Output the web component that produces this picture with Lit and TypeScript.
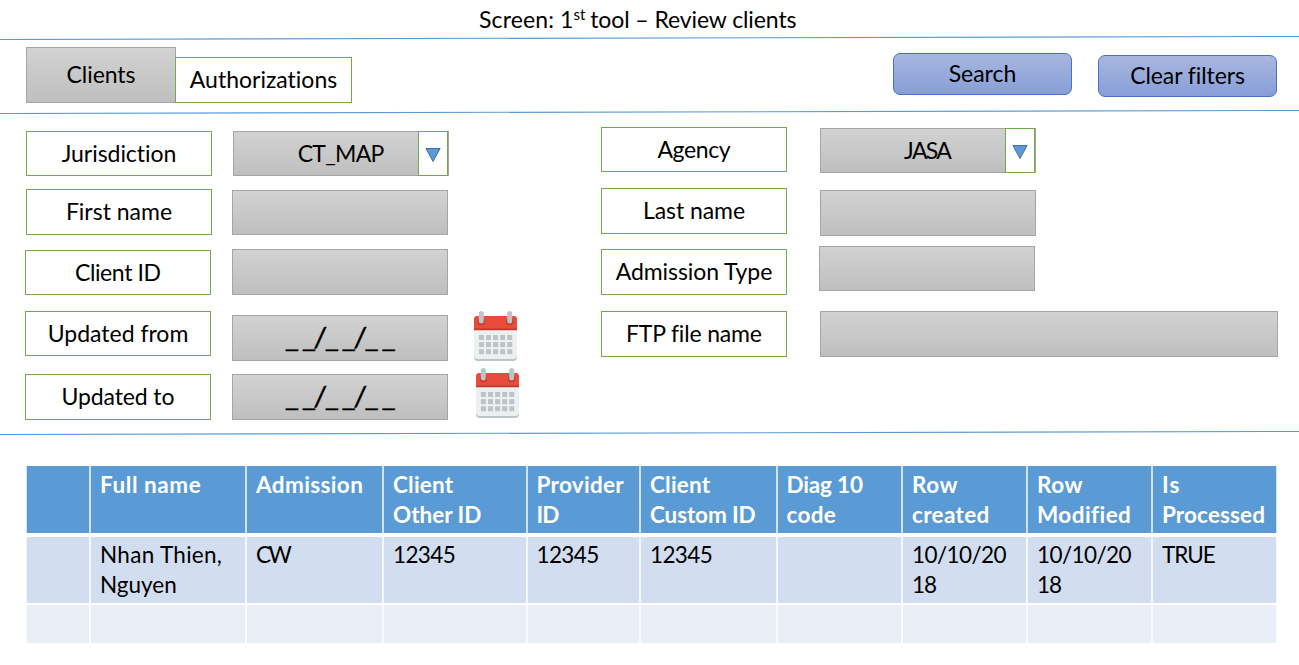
import { LitElement, html, css, svg } from "lit";
import { customElement, property } from "lit/decorators.js";

/** Text that is tracked so that its advance equals a given width. */
@customElement("fit-text")
class FitText extends LitElement {
  @property({ type: Number }) width = 0;

  static styles = css`
    :host { display: block; white-space: nowrap; }
    span { display: inline-block; }
  `;

  render() {
    return html`<span><slot></slot></span>`;
  }

  firstUpdated() {
    const span = this.renderRoot.querySelector("span") as HTMLElement;
    const count = (this.textContent || "").length;
    if (!this.width || count < 2) return;
    const natural = span.offsetWidth;
    const step = (this.width - natural) / (count - 1);
    span.style.letterSpacing = `${step}px`;
    span.style.marginRight = `${-step}px`;
  }
}

@customElement("rule-line")
class RuleLine extends LitElement {
  static styles = css`
    :host { display: block; height: 4px; flex: none; }
    svg { display: block; width: 100%; height: 4px; }
  `;
  render() {
    return html`<svg viewBox="0 0 1299 4" preserveAspectRatio="none">
      <line x1="0" y1="3.5" x2="1299" y2="0.5" stroke="#5b9bd5" stroke-width="1.1"></line>
    </svg>`;
  }
}

@customElement("calendar-icon")
class CalendarIcon extends LitElement {
  static styles = css`
    :host { display: block; width: 43px; height: 50px; }
    svg { display: block; }
  `;
  render() {
    const dots = [];
    for (let r = 0; r < 3; r++)
      for (let c = 0; c < 5; c++)
        dots.push(svg`<rect x=${4.9 + c * 7.1} y=${24 + r * 7.1} width="5" height="5" fill="#bdc3c7"></rect>`);
    return html`<svg width="43" height="50" viewBox="0 0 43 50">
      <path d="M0 20H43V46Q43 50 39 50H4Q0 50 0 46Z" fill="#bdc3c7"></path>
      <path d="M0 19H43V44Q43 48 39 48H4Q0 48 0 44Z" fill="#ecf0f1"></path>
      <path d="M4 5H39Q43 5 43 9V19.3H0V9Q0 5 4 5Z" fill="#c0392b"></path>
      <path d="M4 5H39Q43 5 43 9V17.5H0V9Q0 5 4 5Z" fill="#e74c3c"></path>
      <circle cx="7.3" cy="10.6" r="3.7" fill="#c0392b"></circle>
      <circle cx="35.7" cy="10.6" r="3.7" fill="#c0392b"></circle>
      <rect x="4.8" y="0" width="5" height="12.4" rx="2.5" fill="#bdc3c7"></rect>
      <rect x="33.2" y="0" width="5" height="12.4" rx="2.5" fill="#bdc3c7"></rect>
      ${dots}
    </svg>`;
  }
}

type Line = [string, number];
const HEAD: Line[][] = [
  [],
  [["Full name", 100.5]],
  [["Admission", 107]],
  [["Client", 60], ["Other ID", 88]],
  [["Provider", 87], ["ID", 23]],
  [["Client", 60], ["Custom ID", 106]],
  [["Diag 10", 77], ["code", 49]],
  [["Row", 46], ["created", 77]],
  [["Row", 46], ["Modified", 94]],
  [["Is", 17], ["Processed", 103]],
];
const ROW: Line[][] = [
  [],
  [["Nhan Thien,", 122], ["Nguyen", 77]],
  [["CW", 35.5]],
  [["12345", 62.5]],
  [["12345", 62.5]],
  [["12345", 62.5]],
  [],
  [["10/10/20", 95], ["18", 25]],
  [["10/10/20", 95], ["18", 25]],
  [["TRUE", 54]],
];

@customElement("app-root")
class AppRoot extends LitElement {
  static styles = css`
    :host {
      display: flex; flex-direction: column; width: 1299px; height: 665px;
      background: #fff; color: #000; overflow: hidden;
      font-family: Lato, "Liberation Sans", sans-serif; font-size: 23px; line-height: 30px;
      font-variant-ligatures: none;
    }
    * { box-sizing: border-box; }
    .title { height: 36px; padding: 4px 0 0 479px; display: flex; white-space: nowrap; }
    .sup { font-size: 15px; line-height: 20px; }
    .title .rest { margin-left: 5px; }

    .bar { height: 70px; display: flex; padding: 7px 22px 0 26px; align-items: flex-start; }
    .tab { display: flex; align-items: center; justify-content: center; padding-bottom: 2px; }
    .tab.on { width: 150px; height: 56px; }
    .tab.off { width: 177px; height: 46px; margin: 10px 0 0 -1px; }
    .grey { background: linear-gradient(#d2d2d2, #bfbfbf); border: 1px solid #a5a5a5; }
    .green { background: #fff; border: 1px solid #70ad47; }
    .space { flex: 1; }
    .btn {
      width: 179px; height: 42px; border: 1px solid #4472c4; border-radius: 7px;
      background: linear-gradient(#a8b7df, #879ed7);
      display: flex; align-items: center; justify-content: center; padding-bottom: 2px;
    }
    .btn.search { margin: 6px 26px 0 0; }
    .btn.clear { margin-top: 8px; }

    .filters { height: 317px; display: flex; align-items: flex-start; padding-left: 25px; }
    .col { display: flex; flex-direction: column; align-items: flex-start; flex: none; }
    .labels { width: 187px; }
    .box { width: 186px; height: 45px; display: flex; align-items: center; justify-content: center; padding-bottom: 2px; }
    .h46 { height: 46px; }
    .in1 { margin-left: 1px; }
    .w216 { width: 216px; }
    .w458 { width: 458px; }
    .m10 { margin-top: 10px; } .m13 { margin-top: 13px; }
    .m14 { margin-top: 14px; } .m15 { margin-top: 15px; } .m16 { margin-top: 16px; }
    .m17 { margin-top: 17px; } .m18 { margin-top: 18px; } .m20 { margin-top: 20px; }
    .c1 { margin-top: 17px; }
    .c2 { margin: 17px 0 0 20px; width: 217px; }
    .c3 { margin: 197px 0 0 25px; width: 45px; }
    .c4 { margin: 13px 0 0 82px; width: 186px; }
    .c5 { margin: 14px 0 0 32px; }
    .m7 { margin-top: 7px; }
    .in2 { margin-left: 2px; }
    .select { display: grid; width: 216px; height: 45px; }
    .select > * { grid-area: 1 / 1; }
    .drop { justify-self: end; width: 30px; height: 45px; margin-right: 1px; display: flex; justify-content: center; align-items: center; }
    .drop svg { display: block; margin: 4px 1px 0 0; }
    .date { font-size: 26px; padding-bottom: 3px; -webkit-text-stroke: 0.3px #000; }
    .date fit-text { transform: scaleX(1.2); }

    .table {
      display: grid; margin: 30px 0 0 26px; width: 1252px;
      grid-template-columns: 64px 156px 137px 143.5px 113.5px 136.5px 125.5px 125px 125px 125px;
      grid-template-rows: 69px 70px 40px;
    }
    .cell {
      padding: 4px 0 0 9px; background-clip: padding-box;
      border-style: solid; border-width: 1px 0; border-color: #fff;
      box-shadow: inset 1px 0 rgba(255, 255, 255, 0.72), inset -1px 0 rgba(255, 255, 255, 0.72);
      padding-left: 10px;
    }
    .head { background-color: #5b9bd5; color: #fff; font-weight: 700; font-size: 22.5px; }
    .body { background-color: #d2deef; border-top-width: 3px; padding-top: 3px; font-size: 22.5px; }
    .last { background-color: #eaeff7; }
  `;

  cell(kind: string, lines: Line[]) {
    return html`<div class="cell ${kind}">${lines.map(([t, w]) => html`<fit-text width=${w}>${t}</fit-text>`)}</div>`;
  }

  label(cls: string, text: string, w: number) {
    return html`<div class="box green ${cls}"><fit-text width=${w}>${text}</fit-text></div>`;
  }

  select(cls: string, text: string, w: number) {
    return html`<div class="select ${cls}">
      <div class="box grey w216"><fit-text width=${w}>${text}</fit-text></div>
      <div class="drop green"><svg width="16" height="15" viewBox="0 0 16 15"><path d="M0.9 0.5H15.1L8 13.5Z" fill="#5b9bd5" stroke="#41719c"></path></svg></div>
    </div>`;
  }

  render() {
    return html`
      <div class="title">
        <fit-text width="94">Screen: 1</fit-text><fit-text class="sup" width="12">st</fit-text>
        <fit-text class="rest" width="206">tool – Review clients</fit-text>
      </div>
      <rule-line></rule-line>
      <div class="bar">
        <div class="tab on grey"><fit-text width="68.5">Clients</fit-text></div>
        <div class="tab off green"><fit-text width="147">Authorizations</fit-text></div>
        <div class="space"></div>
        <div class="btn search"><fit-text width="68">Search</fit-text></div>
        <div class="btn clear"><fit-text width="115">Clear filters</fit-text></div>
      </div>
      <rule-line></rule-line>
      <div class="filters">
        <div class="col labels c1">
          ${this.label("in1", "Jurisdiction", 114.5)}
          ${this.label("in1 h46 m13", "First name", 106)}
          ${this.label("m15", "Client ID", 86)}
          ${this.label("m16", "Updated from", 141)}
          ${this.label("h46 m18", "Updated to", 113)}
        </div>
        <div class="col c2">
          ${this.select("in1", "CT_MAP", 86.5)}
          <div class="box grey w216 m14"></div>
          <div class="box grey w216 h46 m14"></div>
          <div class="box grey w216 h46 m20 date"><fit-text width="92.5">_ _/_ _/_ _</fit-text></div>
          <div class="box grey w216 h46 m13 date"><fit-text width="92.5">_ _/_ _/_ _</fit-text></div>
        </div>
        <div class="col c3">
          <calendar-icon></calendar-icon>
          <calendar-icon class="in2 m7"></calendar-icon>
        </div>
        <div class="col c4">
          ${this.label("", "Agency", 73)}
          ${this.label("h46 m16", "Last name", 102.5)}
          ${this.label("h46 m15", "Admission Type", 157)}
          ${this.label("h46 m16", "FTP file name", 136)}
        </div>
        <div class="col c5">
          ${this.select("in1", "JASA", 48)}
          <div class="box grey w216 h46 in1 m17"></div>
          <div class="box grey w216 m10"></div>
          <div class="box grey w458 h46 in1 m20"></div>
        </div>
      </div>
      <rule-line></rule-line>
      <div class="table">
        ${HEAD.map((c) => this.cell("head", c))}
        ${ROW.map((c) => this.cell("body", c))}
        ${HEAD.map(() => this.cell("last", []))}
      </div>
    `;
  }
}
